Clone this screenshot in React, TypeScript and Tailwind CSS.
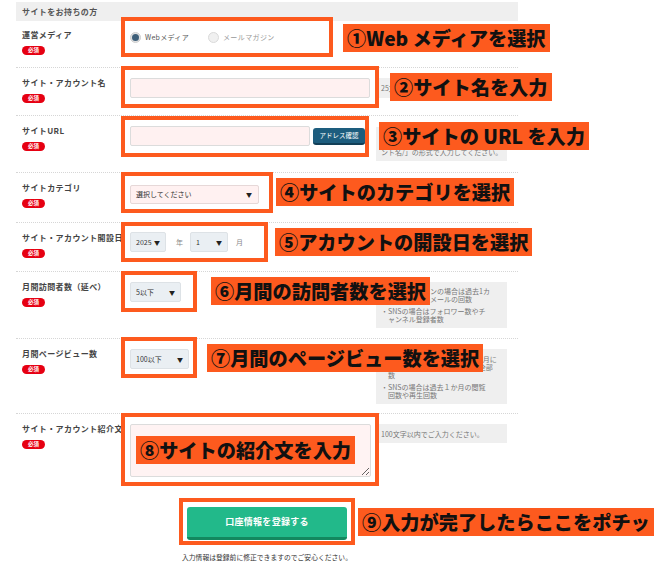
import React from "react";

function Badge() {
  return (
    <div className="mt-[6px] w-[23px] h-[9px] rounded-full bg-[#e60012] text-white text-[5.5px] leading-[9px] text-center font-bold">
      必須
    </div>
  );
}

function Label({ text, first }: { text: string; first?: boolean }) {
  return (
    <div className={first ? "pl-[6px] pt-[9px]" : "pl-[6px] pt-[10px]"}>
      <div className="whitespace-nowrap text-[8px] leading-[10px] font-bold text-[#444] tracking-[0.4px]">
        {text}
      </div>
      <Badge />
    </div>
  );
}

function Row({
  rowClass,
  label,
  first,
  children,
  help,
}: {
  rowClass: string;
  label: string;
  first?: boolean;
  children: React.ReactNode;
  help?: React.ReactNode;
}) {
  return (
    <div className={`grid grid-cols-[105px_255px_131px] ${rowClass}`}>
      <Label text={label} first={first} />
      <div>{children}</div>
      <div>{help}</div>
    </div>
  );
}

function Sel({ w, bg, text }: { w: string; bg: string; text: string }) {
  return (
    <div
      className={`${w} ${bg} h-[20px] border border-[#dde2e6] rounded-[2px] flex items-center justify-between pl-[5px] pr-[5px] text-[7px] text-[#333]`}
    >
      <span>{text}</span>
      <span className="text-[6px] text-[#222]">▼</span>
    </div>
  );
}

function Note({ className, children }: { className: string; children: React.ReactNode }) {
  return (
    <div
      className={`w-[131px] bg-[#efefef] text-[7px] leading-[8px] text-[#777] ${className}`}
    >
      {children}
    </div>
  );
}

function Annot({ className, children }: { className: string; children: React.ReactNode }) {
  return (
    <div
      className={`absolute z-20 h-[28px] bg-[#fd5a1e] px-[4px] text-[19.2px] leading-[28px] font-black text-[#111] whitespace-nowrap ${className}`}
    >
      {children}
    </div>
  );
}

export default function App() {
  return (
    <div className="relative w-[668px] h-[566px] overflow-hidden bg-white font-['Noto_Sans_CJK_JP','Noto_Sans',sans-serif]">
      <div className="ml-[16px] w-[502px] pt-[2px]">
        <div className="h-[19px] bg-[#efefef] pl-[6px] flex items-center text-[8px] font-bold text-[#555] tracking-[0.4px]">
          サイトをお持ちの方
        </div>

        {/* Row 1 */}
        <Row rowClass="h-[46px]" label="運営メディア" first>
          <div className="relative z-10 mt-[-4px] w-[212px] h-[40px] border-4 border-[#fd5a1e] bg-white flex items-center pl-[5px]">
            <span className="w-[11px] h-[11px] rounded-full bg-[#e2e2e2] border border-[#cfcfcf] flex items-center justify-center">
              <span className="w-[7px] h-[7px] rounded-full bg-[#3e5f79]" />
            </span>
            <span className="ml-[4px] text-[7px] tracking-[0.3px] text-[#555]">Webメディア</span>
            <span className="ml-[19px] w-[11px] h-[11px] rounded-full bg-[#f0f0f0] border border-[#dadada]" />
            <span className="ml-[4px] text-[7px] tracking-[0.4px] text-[#999]">メールマガジン</span>
          </div>
        </Row>

        {/* Row 2 */}
        <Row
          rowClass="h-[48px] border-t border-dotted border-[#d6d6d6]"
          label="サイト・アカウント名"
          help={
            <Note className="mt-[10px] h-[20px] pl-[5px] flex items-center">25文字以内でご入力ください。</Note>
          }
        >
          <div className="relative z-10 mt-[-2px] w-[258px] h-[42px] border-4 border-[#fd5a1e] bg-white pt-[8px] pl-[5px]">
            <input className="block w-[240px] h-[20px] bg-[#fff1f1] border border-[#dcdcdc] rounded-[2px] outline-none" />
          </div>
        </Row>

        {/* Row 3 */}
        <Row
          rowClass="h-[57px] border-t border-dotted border-[#d6d6d6]"
          label="サイトURL"
          help={
            <Note className="mt-[11px] p-[5px] whitespace-nowrap">
              「https://ドメイン名/」または
              <br />
              「https://ドメイン名/アカウ
              <br />
              ント名/」の形式で入力してください。
            </Note>
          }
        >
          <div className="relative z-10 w-[248px] h-[41px] border-4 border-[#fd5a1e] bg-white pt-[6px] pl-[5px] flex items-start">
            <input className="block w-[180px] h-[20px] bg-[#fff1f1] border border-[#dcdcdc] rounded-[2px] outline-none" />
            <div className="ml-[3px] mt-[2px] w-[52px] h-[17px] rounded-[3px] bg-[#1d5d7e] border-b-2 border-[#123f57] text-white text-[6.5px] flex items-center justify-center">
              アドレス確認
            </div>
          </div>
        </Row>

        {/* Row 4 */}
        <Row rowClass="h-[50px] border-t border-dotted border-[#d6d6d6]" label="サイトカテゴリ">
          <div className="relative z-10 mt-[-1px] w-[152px] h-[41px] border-4 border-[#fd5a1e] bg-white pt-[9px] pl-[5px]">
            <div className="w-[129px] h-[19px] bg-[#fff1f1] border border-[#e6d8d8] rounded-[2px] flex items-center justify-between pl-[5px] pr-[6px] text-[7px] text-[#333]">
              <span>選択してください</span>
              <span className="text-[6px] text-[#222]">▼</span>
            </div>
          </div>
        </Row>

        {/* Row 5 */}
        <Row rowClass="h-[49px] border-t border-dotted border-[#d6d6d6]" label="サイト・アカウント開設日">
          <div className="relative z-10 mt-[-1px] w-[147px] h-[40px] border-4 border-[#fd5a1e] bg-white pt-[6px] pl-[5px] flex items-start">
            <Sel w="w-[36px]" bg="bg-[#eaeff3]" text="2025" />
            <span className="ml-[10px] h-[20px] flex items-center text-[7px] text-[#888]">年</span>
            <div className="ml-[7px]">
              <Sel w="w-[38px]" bg="bg-[#eaeff3]" text="1" />
            </div>
            <span className="ml-[8px] h-[20px] flex items-center text-[7px] text-[#888]">月</span>
          </div>
        </Row>

        {/* Row 6 */}
        <Row
          rowClass="h-[67px] border-t border-dotted border-[#d6d6d6]"
          label="月間訪問者数（延べ）"
          help={
            <Note className="mt-[10px] px-[5px] pt-[5px] pb-[5px] whitespace-nowrap">
              <div>・メールマガジンの場合は過去1カ</div>
              <div className="pl-[7px]">月に配信したメールの回数</div>
              <div className="mt-[4px]">・SNSの場合はフォロワー数やチ</div>
              <div className="pl-[7px]">ャンネル登録者数</div>
            </Note>
          }
        >
          <div className="relative z-10 mt-[-1px] w-[76px] h-[41px] border-4 border-[#fd5a1e] bg-white pt-[7px] pl-[5px]">
            <Sel w="w-[51px]" bg="bg-[#eaeff3]" text="5以下" />
          </div>
        </Row>

        {/* Row 7 */}
        <Row
          rowClass="h-[75px] border-t border-dotted border-[#d6d6d6]"
          label="月間ページビュー数"
          help={
            <Note className="mt-[10px] px-[5px] pt-[6px] pb-[5px] whitespace-nowrap">
              <div>・Webメディアの場合は過去1カ月に</div>
              <div className="pl-[7px]">サイトで表示されたページの全部</div>
              <div className="pl-[7px]">数</div>
              <div className="mt-[4px]">・SNSの場合は過去１か月の閲覧</div>
              <div className="pl-[7px]">回数や再生回数</div>
            </Note>
          }
        >
          <div className="relative z-10 mt-[-2px] w-[76px] h-[41px] border-4 border-[#fd5a1e] bg-white pt-[8px] pl-[5px]">
            <Sel w="w-[59px]" bg="bg-[#eaeff3]" text="100以下" />
          </div>
        </Row>

        {/* Row 8 */}
        <Row
          rowClass="h-[77px] border-t border-dotted border-[#d6d6d6]"
          label="サイト・アカウント紹介文"
          help={
            <Note className="mt-[10px] h-[19px] pl-[5px] flex items-center">100文字以内でご入力ください。</Note>
          }
        >
          <div className="relative z-10 mt-[-1px] w-[258px] h-[73px] border-4 border-[#fd5a1e] bg-white pt-[7px] pl-[5px]">
            <textarea className="block w-[241px] h-[53px] bg-[#fff3f3] border border-[#dcdcdc] rounded-[2px] outline-none resize" />
          </div>
        </Row>

        {/* Submit */}
        <div className="mt-[8px] flex flex-col items-center">
          <div className="w-[176px] h-[47px] border-4 border-[#fd5a1e] bg-white pt-[5px] pl-[4px]">
            <div className="w-[160px] h-[33px] rounded-[3px] bg-[#22b98a] border-b-[3px] border-[#13885f] text-white text-[9px] font-bold tracking-[0.3px] flex items-center justify-center">
              口座情報を登録する
            </div>
          </div>
          <div className="mt-[7px] text-[6.8px] leading-[10px] text-[#333]">
            入力情報は登録前に修正できますのでご安心ください。
          </div>
        </div>
      </div>

      <Annot className="left-[343px] top-[24px]">①Web メディアを選択</Annot>
      <Annot className="left-[390px] top-[73px]">②サイト名を入力</Annot>
      <Annot className="left-[379px] top-[122px]">③サイトの URL を入力</Annot>
      <Annot className="left-[276px] top-[178px]">④サイトのカテゴリを選択</Annot>
      <Annot className="left-[275px] top-[228px]">⑤アカウントの開設日を選択</Annot>
      <Annot className="left-[211px] top-[277px]">⑥月間の訪問者数を選択</Annot>
      <Annot className="left-[207px] top-[344px]">⑦月間のページビュー数を選択</Annot>
      <Annot className="left-[136px] top-[436px]">⑧サイトの紹介文を入力</Annot>
      <Annot className="left-[358px] top-[508px]">⑨入力が完了したらここをポチッ</Annot>
    </div>
  );
}
